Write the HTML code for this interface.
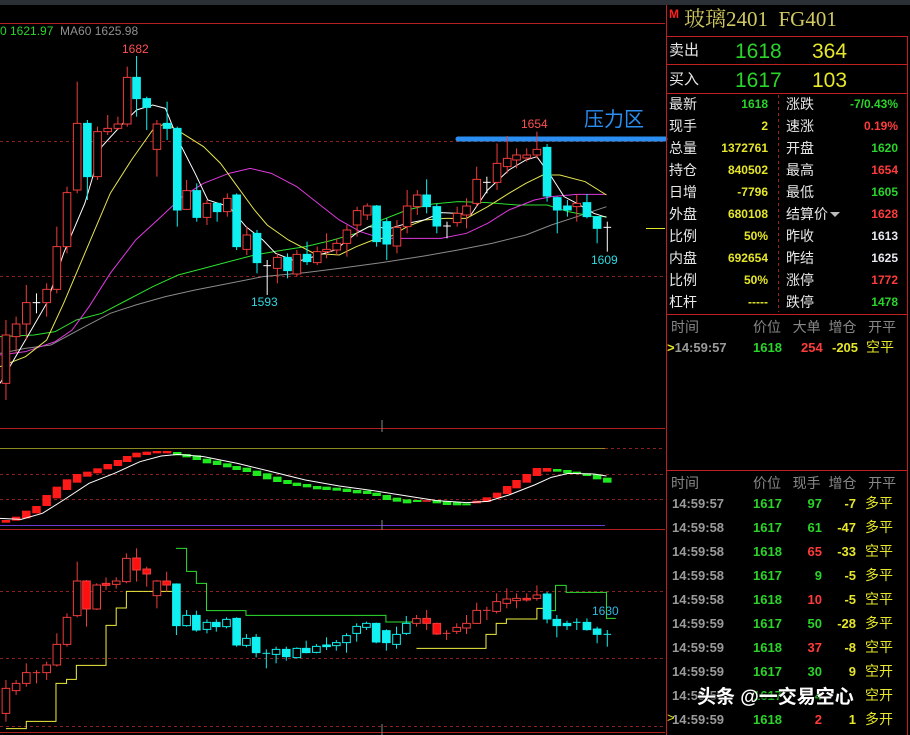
<!DOCTYPE html>
<html><head><meta charset="utf-8">
<style>
*{margin:0;padding:0;box-sizing:border-box}
body{width:910px;height:735px;background:#000;overflow:hidden;position:relative;font-family:"Liberation Sans","Noto Sans CJK SC",sans-serif}
svg{position:absolute;left:0;top:0}
.r{stroke:#f03c3c;fill:#000;vector-effect:non-scaling-stroke}
.rf{stroke:#f03c3c;fill:#ff1010;vector-effect:non-scaling-stroke}
.c{stroke:#10f0f0;fill:#10f0f0;vector-effect:non-scaling-stroke}
.ch{stroke:#10f0f0;fill:#000;vector-effect:non-scaling-stroke}
.w{stroke:#fff;fill:#fff;vector-effect:non-scaling-stroke}
.l{fill:none;vector-effect:non-scaling-stroke;stroke-width:1}
.t{position:absolute;white-space:nowrap;line-height:1}
.lb{color:#e8e8e8;font-size:14px}
.g{color:#2ad42a;font-weight:bold}
.y{color:#e6e62a;font-weight:bold}
.rd{color:#ff3c3c;font-weight:bold}
.tm{color:#9a9a9a;font-weight:bold;font-size:13px}
</style></head><body>
<div style="position:absolute;left:0;top:0;width:910px;height:5px;background:#2b2f36"></div>
<svg width="910" height="735">
<line x1="0" y1="23.5" x2="665" y2="23.5" stroke="#b02020"/>
<line x1="0" y1="428.5" x2="665" y2="428.5" stroke="#b02020"/>
<line x1="0" y1="529.5" x2="665" y2="529.5" stroke="#b02020"/>
<line x1="0" y1="732.5" x2="665" y2="732.5" stroke="#b02020"/>
<line x1="0" y1="141.5" x2="665" y2="141.5" stroke="#8a2020" stroke-dasharray="3,3"/>
<line x1="0" y1="276.5" x2="665" y2="276.5" stroke="#8a2020" stroke-dasharray="3,3"/>
<line x1="0" y1="474.5" x2="665" y2="474.5" stroke="#8a2020" stroke-dasharray="3,3"/>
<line x1="0" y1="499.5" x2="665" y2="499.5" stroke="#8a2020" stroke-dasharray="3,3"/>
<line x1="605" y1="448.5" x2="665" y2="448.5" stroke="#8a2020" stroke-dasharray="3,3"/>
<line x1="0" y1="448.5" x2="605" y2="448.5" stroke="#8a8a20"/>
<line x1="0" y1="525.5" x2="605" y2="525.5" stroke="#6a3ad0"/>
<line x1="0" y1="591.5" x2="665" y2="591.5" stroke="#8a2020" stroke-dasharray="3,3"/>
<line x1="0" y1="658.5" x2="665" y2="658.5" stroke="#8a2020" stroke-dasharray="3,3"/>
<line x1="0" y1="726.5" x2="665" y2="726.5" stroke="#8a2020" stroke-dasharray="3,3"/>
<line x1="382" y1="724" x2="382" y2="735" stroke="#888"/>
<line x1="646" y1="228.5" x2="665" y2="228.5" stroke="#e6e62a"/>
<line x1="458" y1="139" x2="665" y2="139" stroke="#2a8ff0" stroke-width="5" stroke-linecap="round"/>

<g transform="translate(0,20) scale(0.42409,0.33333)">
<polyline class="l" stroke="#8a8a8a" points="0,1000 60,985 120,975 200,920 260,880 320,855 390,830 460,810 540,790 620,770 720,758 800,745 900,728 1000,708 1080,690 1160,670 1240,645 1300,615 1360,590 1430,560"/>
<polyline class="l" stroke="#2ee02e" points="0,950 80,945 130,935 180,900 240,880 300,840 360,800 420,765 480,745 540,725 600,705 660,692 720,680 780,662 840,640 900,600 960,570 1020,552 1080,545 1150,548 1220,555 1290,555 1340,575 1400,590 1430,590"/>
<polyline class="l" stroke="#e03ae0" points="0,1005 60,995 130,965 170,930 210,860 260,760 320,660 380,590 430,530 480,490 540,460 590,445 640,460 700,500 750,550 800,600 850,635 900,655 960,655 1040,655 1100,640 1150,610 1200,570 1260,540 1300,530 1360,523 1430,523"/>
<polyline class="l" stroke="#e6e650" points="0,1040 60,1010 110,960 150,850 200,700 260,520 310,420 360,330 390,310 430,340 480,380 520,430 560,500 600,570 630,615 680,660 740,700 800,705 840,680 880,660 920,650 960,620 1000,600 1050,595 1100,595 1150,560 1200,520 1240,490 1280,465 1320,465 1380,485 1430,525"/>
<polyline class="l" stroke="#fff" points="0,1090 60,960 110,850 150,700 200,550 240,380 290,310 322,270 360,255 390,265 420,360 460,460 490,540 540,560 580,620 620,660 650,700 700,725 740,710 790,690 840,640 870,620 920,625 960,610 1000,600 1040,578 1080,580 1110,585 1150,510 1200,450 1240,420 1266,410 1300,470 1330,530 1360,550 1400,580 1430,592"/>
<g>
<line x1="14" y1="900" x2="14" y2="1140" class="r"/><rect x="5" y="945" width="18" height="145" class="r"/>
<line x1="38" y1="890" x2="38" y2="1000" class="r"/><rect x="29" y="912" width="18" height="38" class="r"/>
<line x1="62" y1="795" x2="62" y2="960" class="r"/><rect x="53" y="848" width="18" height="64" class="r"/>
<line x1="86" y1="820" x2="86" y2="880" class="w"/><line x1="77" y1="848" x2="95" y2="848" class="w"/>
<line x1="110" y1="790" x2="110" y2="890" class="r"/><rect x="101" y="808" width="18" height="40" class="r"/>
<line x1="134" y1="620" x2="134" y2="820" class="r"/><rect x="125" y="680" width="18" height="128" class="r"/>
<line x1="158" y1="500" x2="158" y2="700" class="r"/><rect x="149" y="518" width="18" height="162" class="r"/>
<line x1="182" y1="185" x2="182" y2="520" class="r"/><rect x="173" y="310" width="18" height="200" class="r"/>
<line x1="206" y1="300" x2="206" y2="540" class="c"/><rect x="197" y="310" width="18" height="160" class="c"/>
<line x1="230" y1="320" x2="230" y2="480" class="r"/><rect x="221" y="335" width="18" height="135" class="r"/>
<line x1="254" y1="285" x2="254" y2="345" class="r"/><rect x="245" y="325" width="18" height="10" class="r"/>
<line x1="278" y1="290" x2="278" y2="330" class="r"/><rect x="269" y="312" width="18" height="13" class="r"/>
<line x1="300" y1="140" x2="300" y2="320" class="r"/><rect x="291" y="172" width="18" height="140" class="r"/>
<line x1="322" y1="108" x2="322" y2="290" class="c"/><rect x="313" y="172" width="18" height="64" class="c"/>
<line x1="346" y1="230" x2="346" y2="330" class="c"/><rect x="337" y="236" width="18" height="26" class="c"/>
<line x1="370" y1="300" x2="370" y2="470" class="r"/><rect x="361" y="312" width="18" height="76" class="r"/>
<line x1="394" y1="245" x2="394" y2="360" class="c"/><rect x="385" y="310" width="18" height="15" class="c"/>
<line x1="418" y1="320" x2="418" y2="620" class="c"/><rect x="409" y="325" width="18" height="245" class="c"/>
<line x1="440" y1="480" x2="440" y2="570" class="r"/><rect x="431" y="512" width="18" height="56" class="r"/>
<line x1="464" y1="490" x2="464" y2="605" class="c"/><rect x="455" y="512" width="18" height="80" class="c"/>
<line x1="488" y1="540" x2="488" y2="615" class="r"/><rect x="479" y="550" width="18" height="42" class="r"/>
<line x1="512" y1="548" x2="512" y2="605" class="c"/><rect x="503" y="550" width="18" height="25" class="c"/>
<line x1="536" y1="520" x2="536" y2="590" class="r"/><rect x="527" y="535" width="18" height="40" class="r"/>
<line x1="558" y1="520" x2="558" y2="690" class="c"/><rect x="549" y="525" width="18" height="155" class="c"/>
<line x1="582" y1="620" x2="582" y2="705" class="r"/><rect x="573" y="645" width="18" height="43" class="r"/>
<line x1="606" y1="630" x2="606" y2="760" class="c"/><rect x="597" y="640" width="18" height="88" class="c"/>
<line x1="630" y1="720" x2="630" y2="825" class="w"/><line x1="621" y1="737" x2="639" y2="737" class="w"/>
<line x1="654" y1="700" x2="654" y2="790" class="r"/><rect x="645" y="712" width="18" height="33" class="r"/>
<line x1="678" y1="700" x2="678" y2="775" class="c"/><rect x="669" y="712" width="18" height="40" class="c"/>
<line x1="700" y1="690" x2="700" y2="770" class="r"/><rect x="691" y="703" width="18" height="59" class="r"/>
<line x1="724" y1="665" x2="724" y2="735" class="c"/><rect x="715" y="703" width="18" height="22" class="c"/>
<line x1="748" y1="680" x2="748" y2="735" class="r"/><rect x="739" y="695" width="18" height="33" class="r"/>
<line x1="770" y1="640" x2="770" y2="715" class="r"/><rect x="761" y="688" width="18" height="7" class="r"/>
<line x1="794" y1="655" x2="794" y2="705" class="r"/><rect x="785" y="670" width="18" height="20" class="r"/>
<line x1="818" y1="615" x2="818" y2="710" class="r"/><rect x="809" y="630" width="18" height="40" class="r"/>
<line x1="842" y1="560" x2="842" y2="650" class="r"/><rect x="833" y="572" width="18" height="43" class="r"/>
<line x1="866" y1="550" x2="866" y2="600" class="r"/><rect x="857" y="558" width="18" height="27" class="r"/>
<line x1="888" y1="555" x2="888" y2="680" class="c"/><rect x="879" y="558" width="18" height="107" class="c"/>
<line x1="912" y1="595" x2="912" y2="720" class="c"/><rect x="903" y="605" width="18" height="67" class="c"/>
<line x1="936" y1="600" x2="936" y2="700" class="r"/><rect x="927" y="622" width="18" height="56" class="r"/>
<line x1="960" y1="510" x2="960" y2="640" class="r"/><rect x="951" y="558" width="18" height="62" class="r"/>
<line x1="984" y1="510" x2="984" y2="585" class="r"/><rect x="975" y="525" width="18" height="35" class="r"/>
<line x1="1006" y1="478" x2="1006" y2="580" class="c"/><rect x="997" y="525" width="18" height="35" class="c"/>
<line x1="1030" y1="550" x2="1030" y2="640" class="c"/><rect x="1021" y="560" width="18" height="58" class="c"/>
<line x1="1054" y1="605" x2="1054" y2="655" class="w"/><line x1="1045" y1="618" x2="1063" y2="618" class="w"/>
<line x1="1078" y1="560" x2="1078" y2="620" class="r"/><rect x="1069" y="580" width="18" height="28" class="r"/>
<line x1="1100" y1="535" x2="1100" y2="625" class="r"/><rect x="1091" y="558" width="18" height="27" class="r"/>
<line x1="1124" y1="440" x2="1124" y2="560" class="r"/><rect x="1115" y="478" width="18" height="72" class="r"/>
<line x1="1148" y1="470" x2="1148" y2="520" class="w"/><line x1="1139" y1="487" x2="1157" y2="487" class="w"/>
<line x1="1172" y1="370" x2="1172" y2="510" class="r"/><rect x="1163" y="430" width="18" height="57" class="r"/>
<line x1="1196" y1="348" x2="1196" y2="460" class="r"/><rect x="1187" y="415" width="18" height="25" class="r"/>
<line x1="1218" y1="385" x2="1218" y2="445" class="r"/><rect x="1209" y="405" width="18" height="15" class="r"/>
<line x1="1242" y1="385" x2="1242" y2="425" class="r"/><rect x="1233" y="405" width="18" height="9" class="r"/>
<line x1="1266" y1="335" x2="1266" y2="415" class="r"/><rect x="1257" y="388" width="18" height="17" class="r"/>
<line x1="1290" y1="372" x2="1290" y2="545" class="c"/><rect x="1281" y="382" width="18" height="146" class="c"/>
<line x1="1314" y1="530" x2="1314" y2="640" class="c"/><rect x="1305" y="533" width="18" height="37" class="c"/>
<line x1="1338" y1="540" x2="1338" y2="590" class="c"/><rect x="1329" y="558" width="18" height="12" class="c"/>
<line x1="1360" y1="522" x2="1360" y2="605" class="r"/><rect x="1351" y="550" width="18" height="10" class="r"/>
<line x1="1384" y1="522" x2="1384" y2="595" class="c"/><rect x="1375" y="548" width="18" height="42" class="c"/>
<line x1="1408" y1="590" x2="1408" y2="670" class="c"/><rect x="1399" y="590" width="18" height="35" class="c"/>
<line x1="1432" y1="605" x2="1432" y2="695" class="w"/><line x1="1423" y1="622" x2="1441" y2="622" class="w"/>
</g></g>

<g transform="translate(0,420) scale(0.42409,0.33333)">
<g fill="#ff1a1a">
<rect x="4" y="300" width="20" height="8"/><rect x="28" y="290" width="20" height="12"/><rect x="52" y="272" width="20" height="23"/><rect x="76" y="258" width="20" height="22"/><rect x="100" y="225" width="20" height="33"/><rect x="124" y="200" width="20" height="35"/><rect x="148" y="178" width="20" height="32"/><rect x="172" y="162" width="20" height="26"/><rect x="196" y="155" width="20" height="15"/><rect x="220" y="145" width="20" height="15"/><rect x="244" y="132" width="20" height="16"/><rect x="268" y="120" width="20" height="18"/><rect x="290" y="108" width="20" height="18"/><rect x="312" y="98" width="20" height="14"/><rect x="336" y="95" width="20" height="10"/><rect x="360" y="93" width="20" height="7"/><rect x="384" y="93" width="20" height="7"/>
<rect x="1114" y="242" width="20" height="8"/><rect x="1138" y="232" width="20" height="14"/><rect x="1162" y="218" width="20" height="16"/><rect x="1186" y="198" width="20" height="24"/><rect x="1208" y="180" width="20" height="25"/><rect x="1232" y="162" width="20" height="26"/><rect x="1256" y="144" width="20" height="24"/><rect x="1280" y="144" width="20" height="11"/>
</g>
<g fill="#1ee81e">
<rect x="408" y="96" width="20" height="10"/><rect x="430" y="102" width="20" height="10"/><rect x="454" y="106" width="20" height="14"/><rect x="478" y="116" width="20" height="14"/><rect x="502" y="122" width="20" height="13"/><rect x="526" y="130" width="20" height="12"/><rect x="548" y="138" width="20" height="12"/><rect x="572" y="143" width="20" height="13"/><rect x="596" y="152" width="20" height="16"/><rect x="620" y="160" width="20" height="18"/><rect x="644" y="170" width="20" height="16"/><rect x="668" y="180" width="20" height="12"/><rect x="690" y="188" width="20" height="10"/><rect x="714" y="192" width="20" height="10"/><rect x="738" y="198" width="20" height="10"/><rect x="760" y="200" width="20" height="10"/><rect x="784" y="203" width="20" height="9"/><rect x="808" y="206" width="20" height="10"/><rect x="832" y="210" width="20" height="10"/><rect x="856" y="212" width="20" height="10"/><rect x="878" y="218" width="20" height="10"/><rect x="902" y="225" width="20" height="15"/><rect x="926" y="233" width="20" height="12"/><rect x="950" y="238" width="20" height="12"/><rect x="974" y="240" width="20" height="6"/><rect x="1020" y="240" width="20" height="10"/><rect x="1044" y="243" width="20" height="12"/><rect x="1068" y="246" width="20" height="10"/><rect x="1090" y="250" width="20" height="6"/>
<rect x="1304" y="147" width="20" height="8"/><rect x="1328" y="150" width="20" height="10"/><rect x="1350" y="155" width="20" height="7"/><rect x="1374" y="160" width="20" height="8"/><rect x="1398" y="163" width="20" height="15"/><rect x="1422" y="173" width="20" height="15"/>
</g>
<rect x="996" y="240" width="20" height="6" fill="#c02020"/>
<polyline class="l" stroke="#fff" points="0,295 50,298 100,280 150,240 210,190 270,160 330,125 380,108 420,103 480,110 560,130 640,155 720,180 800,198 880,212 960,228 1030,242 1100,248 1150,244 1200,225 1260,195 1300,172 1340,160 1400,162 1430,168"/>
</g>
<line x1="382" y1="420" x2="382" y2="432" stroke="#888"/>
<line x1="382" y1="520" x2="382" y2="530" stroke="#888"/>

<g transform="translate(0,530) scale(0.42409,0.33333)">
<polyline class="l" stroke="#2ee02e" points="415,55 440,55 440,124 463,124 463,160 487,160 487,242 580,242 580,256 910,256 910,276 980,276"/>
<polyline class="l" stroke="#2ee02e" points="1290,242 1310,242 1310,166 1335,166 1335,187 1430,187 1430,265 1452,265"/>
<polyline class="l" stroke="#f0f040" points="14,596 62,596 62,574 132,574 132,460 157,460 157,448 180,448 180,406 250,406 250,286 274,286 274,234 298,234 298,184 415,184"/>
<polyline class="l" stroke="#f0f040" points="982,355 1146,355 1146,313 1170,313 1170,280 1194,280 1194,267 1266,267 1266,235 1290,235 1290,242"/>
<line x1="14" y1="450" x2="14" y2="575" class="r"/><rect x="5" y="475" width="18" height="75" class="r"/>
<line x1="38" y1="450" x2="38" y2="495" class="r"/><rect x="29" y="460" width="18" height="22" class="r"/>
<line x1="62" y1="400" x2="62" y2="470" class="r"/><rect x="53" y="428" width="18" height="32" class="r"/>
<line x1="86" y1="420" x2="86" y2="460" class="r"/><line x1="77" y1="428" x2="95" y2="428" class="r"/>
<line x1="110" y1="395" x2="110" y2="450" class="r"/><rect x="101" y="405" width="18" height="23" class="r"/>
<line x1="134" y1="310" x2="134" y2="410" class="r"/><rect x="125" y="343" width="18" height="62" class="r"/>
<line x1="158" y1="250" x2="158" y2="350" class="r"/><rect x="149" y="262" width="18" height="81" class="r"/>
<line x1="182" y1="95" x2="182" y2="262" class="r"/><rect x="173" y="153" width="18" height="104" class="r"/>
<line x1="204" y1="150" x2="204" y2="290" class="rf"/><rect x="195" y="153" width="18" height="84" class="rf"/>
<line x1="228" y1="160" x2="228" y2="240" class="r"/><rect x="219" y="165" width="18" height="72" class="r"/>
<line x1="250" y1="142" x2="250" y2="180" class="r"/><rect x="241" y="160" width="18" height="6" class="rf"/>
<line x1="274" y1="142" x2="274" y2="176" class="r"/><rect x="265" y="153" width="18" height="10" class="r"/>
<line x1="298" y1="70" x2="298" y2="160" class="r"/><rect x="289" y="85" width="18" height="70" class="r"/>
<line x1="322" y1="55" x2="322" y2="155" class="rf"/><rect x="313" y="84" width="18" height="36" class="rf"/>
<line x1="346" y1="110" x2="346" y2="170" class="rf"/><rect x="337" y="117" width="18" height="15" class="rf"/>
<line x1="370" y1="150" x2="370" y2="235" class="r"/><rect x="361" y="153" width="18" height="44" class="r"/>
<line x1="393" y1="125" x2="393" y2="185" class="rf"/><rect x="384" y="153" width="18" height="12" class="rf"/>
<line x1="416" y1="160" x2="416" y2="315" class="c"/><rect x="407" y="162" width="18" height="125" class="c"/>
<line x1="440" y1="240" x2="440" y2="290" class="ch"/><rect x="431" y="256" width="18" height="31" class="ch"/>
<line x1="463" y1="242" x2="463" y2="305" class="c"/><rect x="454" y="256" width="18" height="44" class="c"/>
<line x1="488" y1="268" x2="488" y2="310" class="ch"/><rect x="479" y="277" width="18" height="21" class="ch"/>
<line x1="510" y1="268" x2="510" y2="305" class="c"/><rect x="501" y="277" width="18" height="13" class="c"/>
<line x1="534" y1="262" x2="534" y2="295" class="ch"/><rect x="525" y="268" width="18" height="22" class="ch"/>
<line x1="558" y1="262" x2="558" y2="350" class="c"/><rect x="549" y="265" width="18" height="80" class="c"/>
<line x1="581" y1="312" x2="581" y2="352" class="ch"/><rect x="572" y="325" width="18" height="21" class="ch"/>
<line x1="604" y1="312" x2="604" y2="382" class="c"/><rect x="595" y="322" width="18" height="46" class="c"/>
<line x1="628" y1="358" x2="628" y2="415" class="c"/><line x1="619" y1="370" x2="637" y2="370" class="c"/>
<line x1="651" y1="350" x2="651" y2="400" class="ch"/><rect x="642" y="358" width="18" height="15" class="ch"/>
<line x1="675" y1="350" x2="675" y2="392" class="c"/><rect x="666" y="358" width="18" height="22" class="c"/>
<line x1="700" y1="352" x2="700" y2="385" class="ch"/><rect x="691" y="355" width="18" height="28" class="ch"/>
<line x1="722" y1="332" x2="722" y2="370" class="c"/><rect x="713" y="355" width="18" height="13" class="c"/>
<line x1="746" y1="342" x2="746" y2="370" class="ch"/><rect x="737" y="349" width="18" height="18" class="ch"/>
<line x1="770" y1="322" x2="770" y2="360" class="c"/><rect x="761" y="345" width="18" height="5" class="c"/>
<line x1="793" y1="330" x2="793" y2="362" class="ch"/><rect x="784" y="338" width="18" height="9" class="ch"/>
<line x1="817" y1="310" x2="817" y2="368" class="ch"/><rect x="808" y="317" width="18" height="21" class="ch"/>
<line x1="841" y1="280" x2="841" y2="335" class="ch"/><rect x="832" y="289" width="18" height="21" class="ch"/>
<line x1="864" y1="275" x2="864" y2="300" class="ch"/><rect x="855" y="280" width="18" height="12" class="ch"/>
<line x1="887" y1="278" x2="887" y2="340" class="c"/><rect x="878" y="280" width="18" height="56" class="c"/>
<line x1="911" y1="298" x2="911" y2="362" class="c"/><rect x="902" y="302" width="18" height="36" class="c"/>
<line x1="935" y1="290" x2="935" y2="356" class="ch"/><rect x="926" y="313" width="18" height="30" class="ch"/>
<line x1="958" y1="258" x2="958" y2="315" class="ch"/><rect x="949" y="280" width="18" height="30" class="ch"/>
<line x1="982" y1="255" x2="982" y2="290" class="r"/><rect x="973" y="266" width="18" height="14" class="r"/>
<line x1="1006" y1="240" x2="1006" y2="300" class="rf"/><rect x="997" y="265" width="18" height="15" class="rf"/>
<line x1="1030" y1="278" x2="1030" y2="315" class="rf"/><rect x="1021" y="280" width="18" height="32" class="rf"/>
<line x1="1053" y1="300" x2="1053" y2="330" class="r"/><line x1="1044" y1="310" x2="1062" y2="310" class="r"/>
<line x1="1077" y1="280" x2="1077" y2="312" class="r"/><rect x="1068" y="292" width="18" height="12" class="r"/>
<line x1="1100" y1="255" x2="1100" y2="312" class="r"/><rect x="1091" y="280" width="18" height="14" class="r"/>
<line x1="1124" y1="218" x2="1124" y2="282" class="r"/><rect x="1115" y="241" width="18" height="39" class="r"/>
<line x1="1148" y1="230" x2="1148" y2="270" class="r"/><line x1="1139" y1="241" x2="1157" y2="241" class="r"/>
<line x1="1171" y1="190" x2="1171" y2="250" class="r"/><rect x="1162" y="215" width="18" height="29" class="r"/>
<line x1="1195" y1="175" x2="1195" y2="235" class="r"/><rect x="1186" y="207" width="18" height="13" class="r"/>
<line x1="1218" y1="190" x2="1218" y2="235" class="r"/><rect x="1209" y="205" width="18" height="7" class="r"/>
<line x1="1242" y1="190" x2="1242" y2="215" class="rf"/><rect x="1233" y="205" width="18" height="5" class="rf"/>
<line x1="1266" y1="166" x2="1266" y2="212" class="r"/><rect x="1257" y="195" width="18" height="10" class="r"/>
<line x1="1290" y1="186" x2="1290" y2="280" class="c"/><rect x="1281" y="192" width="18" height="75" class="c"/>
<line x1="1313" y1="255" x2="1313" y2="322" class="c"/><rect x="1304" y="268" width="18" height="19" class="c"/>
<line x1="1337" y1="272" x2="1337" y2="300" class="c"/><rect x="1328" y="280" width="18" height="7" class="c"/>
<line x1="1360" y1="265" x2="1360" y2="300" class="c"/><line x1="1351" y1="277" x2="1369" y2="277" class="c"/>
<line x1="1384" y1="265" x2="1384" y2="302" class="c"/><rect x="1375" y="277" width="18" height="22" class="c"/>
<line x1="1408" y1="290" x2="1408" y2="340" class="c"/><rect x="1399" y="297" width="18" height="16" class="c"/>
<line x1="1432" y1="300" x2="1432" y2="350" class="c"/><line x1="1423" y1="313" x2="1441" y2="313" class="c"/>
</g>

<line x1="666.5" y1="5" x2="666.5" y2="735" stroke="#c02020"/>
<line x1="907.5" y1="36" x2="907.5" y2="735" stroke="#c02020"/>
<line x1="667" y1="36.5" x2="908" y2="36.5" stroke="#c02020"/>
<line x1="667" y1="64.5" x2="908" y2="64.5" stroke="#c02020"/>
<line x1="667" y1="93.5" x2="908" y2="93.5" stroke="#c02020"/>
<line x1="667" y1="314.5" x2="908" y2="314.5" stroke="#c02020"/>
<line x1="667" y1="470.5" x2="908" y2="470.5" stroke="#c02020"/>
<line x1="778.5" y1="95" x2="778.5" y2="312" stroke="#a02020" stroke-dasharray="3,3"/>
<polygon points="830,212 840,212 835,217" fill="#bbb"/>
</svg>

<div class="t" style="left:0;top:25px;font-size:12px;color:#2ad42a">0 1621.97 <span style="color:#909090">&nbsp;MA60 1625.98</span></div>
<div class="t" style="left:122px;top:43px;font-size:12px;color:#ff5050">1682</div>
<div class="t" style="left:521px;top:118px;font-size:12px;color:#ff5050">1654</div>
<div class="t" style="left:251px;top:296px;font-size:12px;color:#30d8e0">1593</div>
<div class="t" style="left:591px;top:254px;font-size:12px;color:#30d8e0">1609</div>
<div class="t" style="left:592px;top:605px;font-size:12px;color:#30b8e0">1630</div>
<div class="t" style="left:584px;top:110px;font-size:20px;color:#2a8ff0">压力区</div>

<div class="t" style="left:669px;top:8px;font-size:12px;color:#ff2020;font-weight:bold">M</div>
<div class="t" style="left:684px;top:9px;font-size:21px;color:#d0c860;font-family:'Liberation Serif','Noto Serif CJK SC',serif">玻璃2401&nbsp; FG401</div>
<div class="t lb" style="left:669px;top:43px;font-size:15px">卖出</div>
<div class="t" style="left:735px;top:41px;font-size:21px;color:#2ad42a">1618</div>
<div class="t" style="left:812px;top:41px;font-size:21px;color:#e6e62a">364</div>
<div class="t lb" style="left:669px;top:72px;font-size:15px">买入</div>
<div class="t" style="left:735px;top:70px;font-size:21px;color:#2ad42a">1617</div>
<div class="t" style="left:812px;top:70px;font-size:21px;color:#e6e62a">103</div>

<div style="position:absolute;left:669px;top:93px;width:100px;font-size:14px;line-height:22px;color:#e8e8e8">最新<br>现手<br>总量<br>持仓<br>日增<br>外盘<br>比例<br>内盘<br>比例<br>杠杆</div>
<div style="position:absolute;left:700px;top:93px;width:68px;text-align:right;font-size:12px;line-height:22px;font-weight:bold;color:#e6e62a"><span style="color:#2ad42a">1618</span><br>2<br>1372761<br>840502<br>-7796<br>680108<br>50%<br>692654<br>50%<br>-----</div>
<div style="position:absolute;left:786px;top:93px;width:100px;font-size:14px;line-height:22px;color:#e8e8e8">涨跌<br>速涨<br>开盘<br>最高<br>最低<br>结算价<br>昨收<br>昨结<br>涨停<br>跌停</div>
<div style="position:absolute;left:830px;top:93px;width:68px;text-align:right;font-size:12px;line-height:22px;font-weight:bold"><span style="color:#2ad42a">-7/0.43%</span><br><span style="color:#ff3c3c">0.19%</span><br><span style="color:#2ad42a">1620</span><br><span style="color:#ff3c3c">1654</span><br><span style="color:#2ad42a">1605</span><br><span style="color:#ff3c3c">1628</span><br><span style="color:#e8e8f0">1613</span><br><span style="color:#e8e8f0">1625</span><br><span style="color:#ff3c3c">1772</span><br><span style="color:#2ad42a">1478</span></div>

<div class="t" style="left:671px;top:320px;font-size:14px;color:#888">时间</div>
<div class="t" style="left:753px;top:320px;font-size:14px;color:#888">价位&nbsp;&nbsp; 大单&nbsp; 增仓&nbsp;&nbsp; 开平</div>
<div class="t tm" style="left:667px;top:341px"><span style="color:#e6e62a">&gt;</span>14:59:57</div>
<div class="t g" style="left:753px;top:341px;font-size:13px">1618</div>
<div class="t rd" style="left:801px;top:341px;font-size:13px">254</div>
<div class="t y" style="left:832px;top:341px;font-size:13px">-205</div>
<div class="t" style="left:866px;top:340px;font-size:14px;color:#e6e62a">空平</div>

<div class="t" style="left:671px;top:476px;font-size:14px;color:#888">时间</div>
<div class="t" style="left:753px;top:476px;font-size:14px;color:#888">价位&nbsp;&nbsp; 现手&nbsp; 增仓&nbsp;&nbsp; 开平</div>
<div style="position:absolute;left:672px;top:492px;font-size:13px;line-height:24px;font-weight:bold;color:#9a9a9a">14:59:57<br>14:59:58<br>14:59:58<br>14:59:58<br>14:59:58<br>14:59:59<br>14:59:59<br>14:59:59<br>14:59:59<br>14:59:59</div>
<div style="position:absolute;left:753px;top:492px;font-size:13px;line-height:24px;font-weight:bold;color:#2ad42a">1617<br>1617<br>1618<br>1617<br>1618<br>1617<br>1618<br>1617<br>1617<br>1618</div>
<div style="position:absolute;left:790px;top:492px;width:32px;text-align:right;font-size:13px;line-height:24px;font-weight:bold;color:#2ad42a">97<br>61<br><span style="color:#ff3c3c">65</span><br>9<br><span style="color:#ff3c3c">10</span><br>50<br><span style="color:#ff3c3c">37</span><br>30<br>4<br><span style="color:#ff3c3c">2</span></div>
<div style="position:absolute;left:820px;top:492px;width:36px;text-align:right;font-size:13px;line-height:24px;font-weight:bold;color:#e6e62a">-7<br>-47<br>-33<br>-5<br>-5<br>-28<br>-8<br>9<br>&nbsp;<br>1</div>
<div style="position:absolute;left:865px;top:491px;font-size:14px;line-height:24px;color:#e6e62a">多平<br>多平<br>空平<br>多平<br>空平<br>多平<br>空平<br>空开<br>空开<br>多开</div>
<div class="t" style="left:667px;top:711px;font-size:13px;color:#e6e62a">&gt;</div>
<div class="t" style="left:697px;top:688px;font-size:19px;font-weight:bold;color:#fff;text-shadow:0 0 3px #000,1px 1px 2px #000">头条 @一交易空心</div>
</body></html>
